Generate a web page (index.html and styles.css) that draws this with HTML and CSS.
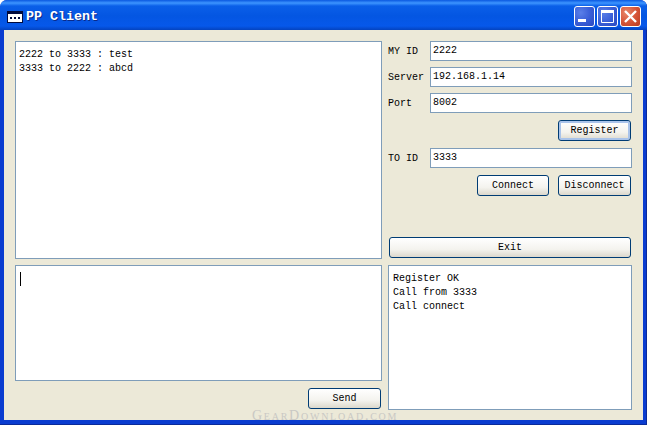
FILE: index.html
```html
<!DOCTYPE html>
<html lang="en">
<head>
<meta charset="utf-8">
<title>PP Client</title>
<link rel="stylesheet" href="styles.css">
</head>
<body>
<div class="window">
  <header class="titlebar">
    <svg class="app-icon" width="16" height="12" viewBox="0 0 16 12">
      <rect x="0" y="0" width="16" height="12" fill="#000a3c"/>
      <rect x="1" y="3" width="14" height="8" fill="#fff"/>
      <rect x="3" y="6" width="2" height="2" fill="#000a3c"/>
      <rect x="7" y="6" width="2" height="2" fill="#000a3c"/>
      <rect x="11" y="6" width="2" height="2" fill="#000a3c"/>
    </svg>
    <span class="title">PP Client</span>
    <div class="controls">
      <div class="ctl ctl-blue">
        <svg width="21" height="21" viewBox="0 0 21 21"><rect x="4" y="13" width="8" height="3" fill="#fff"/></svg>
      </div>
      <div class="ctl ctl-blue">
        <svg width="21" height="21" viewBox="0 0 21 21"><path d="M4.5 4.5h12v12h-12z" fill="none" stroke="#fff"/><rect x="4" y="4" width="13" height="3" fill="#fff"/></svg>
      </div>
      <div class="ctl ctl-red">
        <svg width="21" height="21" viewBox="0 0 21 21"><path d="M5 5l11 11M16 5L5 16" stroke="#fff" stroke-width="2.4" fill="none"/></svg>
      </div>
    </div>
  </header>
  <main class="client">
    <section class="left">
      <div class="box log"><p>2222 to 3333 : test</p><p>3333 to 2222 : abcd</p></div>
      <div class="box compose"><span class="caret"></span></div>
      <div class="send-row"><button class="btn">Send</button></div>
    </section>
    <section class="right">
      <div class="field"><span class="label">MY ID</span><div class="input">2222</div></div>
      <div class="field"><span class="label">Server</span><div class="input">192.168.1.14</div></div>
      <div class="field"><span class="label">Port</span><div class="input">8002</div></div>
      <div class="actions"><button class="btn btn-default">Register</button></div>
      <div class="field"><span class="label">TO ID</span><div class="input">3333</div></div>
      <div class="actions"><button class="btn btn-connect">Connect</button><button class="btn">Disconnect</button></div>
      <button class="btn btn-exit">Exit</button>
      <div class="box status"><p>Register OK</p><p>Call from 3333</p><p>Call connect</p></div>
    </section>
  </main>
  <div class="watermark">GearDownload.com</div>
</div>
</body>
</html>
```
FILE: styles.css
```css
* { box-sizing: border-box; }
html, body { margin: 0; padding: 0; }
body { width: 647px; height: 425px; overflow: hidden; background: #fff; font-family: "Liberation Mono", "DejaVu Sans Mono", monospace; font-size: 10px; color: #000; }
.window { position: relative; width: 647px; height: 425px; display: flex; flex-direction: column; background: #0a3cd0; box-shadow: inset -1px -1px 0 #0a2a9a; border-radius: 7px 7px 0 0; }
.titlebar { height: 30px; flex: none; display: flex; align-items: center; padding: 0 6px 0 7px; background: linear-gradient(180deg, #0a58e0 0, #3d95ff 3px, #0a5fe8 6px, #0456e2 16px, #0658ea 26px, #0443bf 30px); border-radius: 7px 7px 0 0; }
.app-icon { flex: none; margin-top: 3px; }
.title { margin-left: 3px; margin-top: 3px; color: #fff; font-size: 13.33px; font-weight: bold; text-shadow: 1px 1px 0 #0a2a8a; }
.controls { margin-left: auto; display: flex; gap: 2px; margin-top: 3px; }
.ctl { width: 21px; height: 21px; border: 1px solid #fff; border-radius: 3px; overflow: hidden; }
.ctl svg { display: block; margin: -1px; }
.ctl-blue { background: radial-gradient(circle at 30% 30%, #5a7fe8 0, #3a5fd8 50%, #2a48c0 100%); }
.ctl-red { background: radial-gradient(circle at 30% 30%, #e8886a 0, #d8563a 50%, #b83a20 100%); }
.client { flex: none; height: 390px; margin: 0 4px; padding: 11px 11px 0; display: flex; gap: 6px; background: #ece9d8; }
.left { width: 367px; display: flex; flex-direction: column; }
.right { width: 244px; display: flex; flex-direction: column; }
.box { background: #fff; border: 1px solid #7f9db9; padding: 6px 3px; line-height: 14px; }
.box p { margin: 0; }
.log { height: 218px; }
.compose { height: 116px; margin-top: 6px; padding-left: 4px; }
.caret { display: block; width: 1px; height: 14px; background: #000; }
.send-row { display: flex; justify-content: flex-end; padding-right: 1px; margin-top: 7px; }
.btn { display: block; width: 73px; height: 21px; padding: 0; font: inherit; color: #000; background: linear-gradient(180deg, #fff 0, #f4f3ee 60%, #dcd8cc 100%); border: 1px solid #003c74; border-radius: 3px; }
.btn-default { box-shadow: inset 0 0 0 2px #a9c3ea; }
.btn-connect { margin-right: 9px; width: 72px; }
.btn-exit { width: 242px; margin-left: 1px; margin-top: 34px; }
.field { display: flex; align-items: center; height: 20px; margin-bottom: 6px; }
.label { width: 42px; }
.input { flex: 1; height: 20px; line-height: 18px; padding-left: 2px; background: #fff; border: 1px solid #7f9db9; }
.actions { display: flex; justify-content: flex-end; padding-right: 1px; margin-top: 1px; margin-bottom: 7px; }
.status { height: 145px; margin-top: 7px; padding-left: 4px; }
.watermark { position: absolute; left: 252px; top: 410px; font-family: "Liberation Serif", serif; font-size: 14px; line-height: 11px; letter-spacing: 1.75px; color: #c9c8c4; font-variant: small-caps; white-space: nowrap; }
```
